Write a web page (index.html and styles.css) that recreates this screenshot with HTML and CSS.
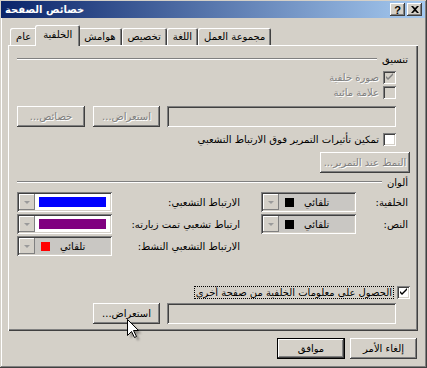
FILE: index.html
```html
<!DOCTYPE html>
<html lang="ar">
<head>
    <meta charset="UTF-8">
    <title>خصائص الصفحة</title>
    <link rel="stylesheet" href="styles.css">
</head>
<body>
    <div class="window">
        <!-- Title bar -->
        <div class="titlebar">
            <span class="title">خصائص الصفحة</span>
            <div class="caption-buttons">
                <span class="cap-btn help">?</span>
                <span class="cap-btn">
                    <svg width="8" height="7" viewBox="0 0 8 7"><path d="M0 0h2l2 2 2-2h2L5 3.5 8 7H6L4 5 2 7H0l3-3.5z" fill="#000"/></svg>
                </span>
            </div>
        </div>

        <!-- Tabs -->
        <div class="tabs">
            <div class="tab">عام</div>
            <div class="tab active">الخلفية</div>
            <div class="tab">هوامش</div>
            <div class="tab">تخصيص</div>
            <div class="tab">اللغة</div>
            <div class="tab">مجموعة العمل</div>
        </div>

        <div class="panel">
            <div class="group-title"><span>تنسيق</span><i class="rule"></i></div>

            <div class="check-row indent row-img">
                <span class="checkbox disabled checked"></span>
                <span class="text-disabled">صورة خلفية</span>
            </div>
            <div class="check-row indent row-mark">
                <span class="checkbox disabled"></span>
                <span class="text-disabled">علامة مائية</span>
            </div>

            <div class="file-row indent row-file">
                <span class="textbox"></span>
                <span class="btn disabled browse">استعراض...</span>
                <span class="btn disabled props">خصائص...</span>
            </div>

            <div class="check-row indent row-hover">
                <span class="checkbox"></span>
                <span>تمكين تأثيرات التمرير فوق الارتباط التشعبي</span>
            </div>

            <div class="row-style">
                <span class="btn disabled style-btn">النمط عند التمرير...</span>
            </div>

            <div class="group-title row-colors-title"><span>ألوان</span><i class="rule"></i></div>

            <div class="colors">
                <span class="color-label">الخلفية:</span>
                <div class="combo">
                    <span class="combo-arrow"></span>
                    <span class="combo-field auto"><span class="swatch" style="background:#000"></span><span>تلقائي</span></span>
                </div>
                <span class="color-label wide">الارتباط التشعبي:</span>
                <div class="combo">
                    <span class="combo-arrow"></span>
                    <span class="combo-field"><span class="bar" style="background:#0000ff"></span></span>
                </div>

                <span class="color-label">النص:</span>
                <div class="combo">
                    <span class="combo-arrow"></span>
                    <span class="combo-field auto"><span class="swatch" style="background:#000"></span><span>تلقائي</span></span>
                </div>
                <span class="color-label wide">ارتباط تشعبي تمت زيارته:</span>
                <div class="combo">
                    <span class="combo-arrow"></span>
                    <span class="combo-field"><span class="bar" style="background:#800080"></span></span>
                </div>

                <span class="color-label"></span>
                <span></span>
                <span class="color-label wide">الارتباط التشعبي النشط:</span>
                <div class="combo">
                    <span class="combo-arrow"></span>
                    <span class="combo-field auto"><span class="swatch" style="background:#ff0000"></span><span>تلقائي</span></span>
                </div>
            </div>

            <div class="check-row row-other">
                <span class="checkbox checked"></span>
                <span class="focus">الحصول على معلومات الخلفية من صفحة أخرى</span>
            </div>

            <div class="file-row indent row-file2">
                <span class="textbox"></span>
                <span class="btn browse">استعراض...</span>
            </div>
        </div>

        <div class="footer">
            <span class="btn footer-btn">إلغاء الأمر</span>
            <span class="btn footer-btn default">موافق</span>
        </div>

        <!-- mouse pointer -->
        <svg class="cursor" width="18" height="24" viewBox="0 0 18 24">
            <defs>
                <filter id="blur"><feGaussianBlur stdDeviation="1"/></filter>
            </defs>
            <path d="M3.5 3.5v16l4-4 3 6 2-1-3-6h5z" fill="rgba(0,0,0,0.35)" filter="url(#blur)"/>
            <path d="M0.5 0.5v16l4-4 3 6 2-1-3-6h5z" fill="#fff" stroke="#000" stroke-width="1"/>
        </svg>
    </div>
</body>
</html>
```

FILE: styles.css
```css
* {
    margin: 0;
    padding: 0;
    box-sizing: border-box;
}

body {
    background: #d4d0c8;
    font-family: 'DejaVu Sans', sans-serif;
    font-size: 10px;
    color: #000;
}

.window {
    position: relative;
    width: 427px;
    height: 368px;
    padding: 1px 2px 0 1px;
    background: #d4d0c8;
    box-shadow: inset -1px -1px #404040, inset 1px 1px #d4d0c8, inset -2px -2px #808080, inset 2px 2px #fff;
}

/* Title bar */
.titlebar {
    height: 17px;
    display: flex;
    align-items: center;
    justify-content: space-between;
    background: linear-gradient(to right, #0a246a, #a6caf0);
    padding: 0 3px 0 4px;
}

.title {
    color: #fff;
    font-weight: bold;
    font-size: 10px;
}

.caption-buttons {
    display: flex;
    gap: 2px;
}

.cap-btn {
    width: 15px;
    height: 13px;
    display: flex;
    align-items: center;
    justify-content: center;
    background: #d4d0c8;
    box-shadow: inset -1px -1px #404040, inset 1px 1px #fff, inset -2px -2px #808080;
    font-family: 'Liberation Sans', sans-serif;
    font-weight: bold;
    font-size: 11px;
}

/* Tabs */
.tabs {
    display: flex;
    align-items: flex-end;
    height: 27px;
    padding-left: 9px;
}

.tab {
    height: 17px;
    padding: 0 6px;
    display: flex;
    align-items: center;
    border-radius: 2px 2px 0 0;
    box-shadow: inset 1px 1px #fff, inset -1px 0 #404040, inset -2px 0 #808080;
}

.tab.active {
    position: relative;
    z-index: 1;
    height: 21px;
    margin: 0 -2px -1px;
    padding: 0 8px 2px;
    background: #d4d0c8;
}

/* Panel */
.panel {
    direction: rtl;
    width: 410px;
    height: 286px;
    margin-left: 7px;
    padding: 8px 8px 0 9px;
    display: flex;
    flex-direction: column;
    box-shadow: inset 1px 1px #fff, inset -1px -1px #404040, inset -2px -2px #808080;
}

.group-title {
    height: 12px;
    display: flex;
    align-items: center;
    gap: 5px;
    padding-right: 2px;
}

.rule {
    flex: 1;
    height: 2px;
    border-top: 1px solid #808080;
    border-bottom: 1px solid #fff;
}

.indent {
    margin-right: 14px;
}

.check-row {
    height: 13px;
    display: flex;
    align-items: center;
    gap: 4px;
}

.checkbox {
    width: 13px;
    height: 13px;
    flex: none;
    background: #fff;
    box-shadow: inset 1px 1px #808080, inset -1px -1px #fff, inset 2px 2px #404040, inset -2px -2px #d4d0c8;
}

.checkbox.disabled {
    background: #d4d0c8;
}

.checkbox.checked {
    background-image: url("data:image/svg+xml,%3Csvg xmlns='http://www.w3.org/2000/svg' width='13' height='13'%3E%3Cpath d='M3 5v2l2 2 5-5V2L5 7z' fill='%23000'/%3E%3C/svg%3E");
}

.checkbox.disabled.checked {
    background-image: url("data:image/svg+xml,%3Csvg xmlns='http://www.w3.org/2000/svg' width='13' height='13'%3E%3Cpath d='M3 5v2l2 2 5-5V2L5 7z' fill='%23808080'/%3E%3C/svg%3E");
}

.text-disabled,
.btn.disabled {
    color: #808080;
    text-shadow: 1px 1px #fff;
}

.row-img { margin-top: 6px; }
.row-mark { margin-top: 2px; }

.file-row {
    height: 21px;
    display: flex;
}

.row-file { margin-top: 7px; }

.textbox {
    width: 229px;
    height: 21px;
    background: #d4d0c8;
    box-shadow: inset 1px 1px #808080, inset -1px -1px #fff, inset 2px 2px #404040, inset -2px -2px #d4d0c8;
}

.btn {
    height: 21px;
    display: flex;
    align-items: center;
    justify-content: center;
    background: #d4d0c8;
    box-shadow: inset -1px -1px #404040, inset 1px 1px #fff, inset -2px -2px #808080, inset 2px 2px #d4d0c8;
}

.browse {
    width: 67px;
    margin-right: 7px;
}

.props {
    width: 68px;
    margin-right: 8px;
}

.row-hover { margin-top: 6px; }

.row-style {
    margin-top: 6px;
    display: flex;
}

.style-btn {
    width: 90px;
}

.row-colors-title { margin-top: 3px; }

/* Colours grid */
.colors {
    margin-top: 4px;
    display: grid;
    grid-template-columns: 54px 95px 149px 95px;
    grid-auto-rows: 20px;
    row-gap: 2px;
    align-items: center;
}

.color-label {
    padding-right: 2px;
}

.color-label.wide {
    padding-right: 21px;
}

.combo {
    direction: ltr;
    height: 20px;
    display: flex;
    padding: 2px;
    background: #fff;
    box-shadow: inset 1px 1px #808080, inset -1px -1px #fff, inset 2px 2px #404040, inset -2px -2px #d4d0c8;
}

.combo-arrow {
    width: 16px;
    flex: none;
    position: relative;
    background: #d4d0c8;
    box-shadow: inset -1px -1px #808080, inset 1px 1px #fff;
}

.combo-arrow::after {
    content: "";
    position: absolute;
    left: 5px;
    top: 7px;
    border-left: 3px solid transparent;
    border-right: 3px solid transparent;
    border-top: 3px solid #9a9a9a;
}

.combo-field {
    flex: 1;
    display: flex;
    align-items: center;
    padding: 0 4px;
}

.combo-field.auto {
    background: #c9c7c3;
    gap: 10px;
    padding-left: 6px;
}

.swatch {
    width: 9px;
    height: 9px;
    flex: none;
}

.bar {
    flex: 1;
    height: 10px;
}

.row-other { margin-top: 30px; }

.focus {
    padding: 0 1px;
    outline: 1px dotted #000;
    outline-offset: 0;
}

.row-file2 { margin-top: 4px; }

/* Footer */
.footer {
    direction: rtl;
    margin-top: 7px;
    padding-right: 8px;
    display: flex;
    gap: 5px;
}

.footer-btn {
    width: 67px;
}

.footer-btn.default {
    width: 68px;
    box-shadow: inset 0 0 0 1px #000, inset -2px -2px #404040, inset 2px 2px #fff, inset -3px -3px #808080;
}

.cursor {
    position: absolute;
    left: 127px;
    top: 319px;
}
```
